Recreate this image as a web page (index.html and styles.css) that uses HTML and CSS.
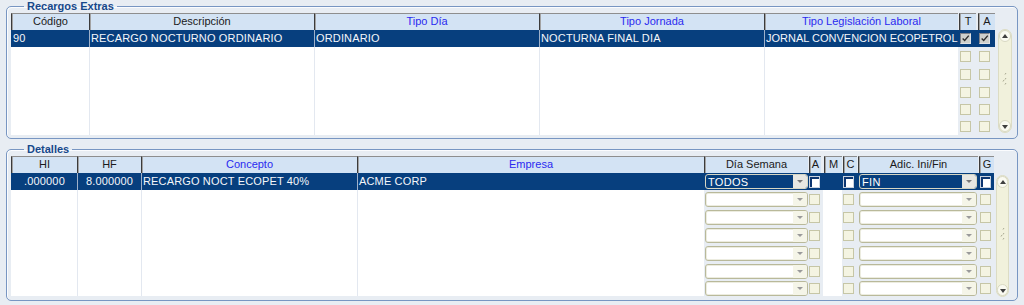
FILE: index.html
```html
<!DOCTYPE html>
<html lang="es">
<head>
  <meta charset="UTF-8" />
  <title>Recargos Extras</title>
  <link rel="stylesheet" href="styles.css">
</head>
<body>
  <fieldset class="group top">
    <legend>Recargos Extras</legend>
    <div class="grid-wrap">
      <div class="grid">
        <div class="row head">
          <div class="cell hd c-code">Código</div>
          <div class="cell hd c-desc">Descripción</div>
          <div class="cell hd link c-day">Tipo Día</div>
          <div class="cell hd link c-shift">Tipo Jornada</div>
          <div class="cell hd link c-law">Tipo Legislación Laboral</div>
          <div class="cell c-t"><span class="tag">T</span></div>
          <div class="cell c-a"><span class="tag">A</span></div>
        </div>
        <div class="row sel">
          <div class="cell txt first c-code">90</div>
          <div class="cell txt c-desc">RECARGO NOCTURNO ORDINARIO</div>
          <div class="cell txt c-day">ORDINARIO</div>
          <div class="cell txt c-shift">NOCTURNA FINAL DIA</div>
          <div class="cell txt tight c-law">JORNAL CONVENCION ECOPETROL</div>
          <div class="cell box c-t"><span class="chk on"><svg viewBox="0 0 11 11"><path d="M2 5.5 4.5 8 9.5 2" /></svg></span></div>
          <div class="cell box c-a"><span class="chk on"><svg viewBox="0 0 11 11"><path d="M2 5.5 4.5 8 9.5 2" /></svg></span></div>
        </div>
        <div class="row blank">
          <div class="cell txt first c-code"></div><div class="cell txt c-desc"></div><div class="cell txt c-day"></div><div class="cell txt c-shift"></div><div class="cell txt c-law"></div>
          <div class="cell box c-t"><span class="chk"></span></div><div class="cell box c-a"><span class="chk"></span></div>
        </div>
        <div class="row blank">
          <div class="cell txt first c-code"></div><div class="cell txt c-desc"></div><div class="cell txt c-day"></div><div class="cell txt c-shift"></div><div class="cell txt c-law"></div>
          <div class="cell box c-t"><span class="chk"></span></div><div class="cell box c-a"><span class="chk"></span></div>
        </div>
        <div class="row blank">
          <div class="cell txt first c-code"></div><div class="cell txt c-desc"></div><div class="cell txt c-day"></div><div class="cell txt c-shift"></div><div class="cell txt c-law"></div>
          <div class="cell box c-t"><span class="chk"></span></div><div class="cell box c-a"><span class="chk"></span></div>
        </div>
        <div class="row blank short">
          <div class="cell txt first c-code"></div><div class="cell txt c-desc"></div><div class="cell txt c-day"></div><div class="cell txt c-shift"></div><div class="cell txt c-law"></div>
          <div class="cell box c-t"><span class="chk"></span></div><div class="cell box c-a"><span class="chk"></span></div>
        </div>
        <div class="row blank short">
          <div class="cell txt first c-code"></div><div class="cell txt c-desc"></div><div class="cell txt c-day"></div><div class="cell txt c-shift"></div><div class="cell txt c-law"></div>
          <div class="cell box c-t"><span class="chk"></span></div><div class="cell box c-a"><span class="chk"></span></div>
        </div>
      </div>
      <div class="vscroll vs-top">
        <span class="sb-btn up"></span>
        <svg class="grip" viewBox="0 0 6 20"><path d="M4 2 3 3.5M4 7 3 8.5M4 12 3 13.5M2 9 1 10.5" /></svg>
        <span class="sb-btn down"></span>
      </div>
    </div>
  </fieldset>

  <fieldset class="group bottom">
    <legend>Detalles</legend>
    <div class="grid-wrap">
      <div class="grid">
        <div class="row head">
          <div class="cell hd c-hi">HI</div>
          <div class="cell hd c-hf">HF</div>
          <div class="cell hd link c-concept">Concepto</div>
          <div class="cell hd link c-company">Empresa</div>
          <div class="cell hd c-week">Día Semana</div>
          <div class="cell c-ca"><span class="tag">A</span></div>
          <div class="cell c-cm"><span class="tag">M</span></div>
          <div class="cell c-cc"><span class="tag">C</span></div>
          <div class="cell hd c-adic">Adic. Ini/Fin</div>
          <div class="cell c-cg"><span class="tag">G</span></div>
        </div>
        <div class="row sel">
          <div class="cell txt first num c-hi">.000000</div>
          <div class="cell txt num c-hf">8.000000</div>
          <div class="cell txt c-concept">RECARGO NOCT ECOPET 40%</div>
          <div class="cell txt c-company">ACME CORP</div>
          <div class="cell box c-week"><div class="combo"><span class="combo-val">TODOS</span><span class="combo-btn"></span></div></div>
          <div class="cell box c-ca"><span class="chk off"></span></div>
          <div class="cell box c-cm"></div>
          <div class="cell box c-cc"><span class="chk off"></span></div>
          <div class="cell box c-adic"><div class="combo"><span class="combo-val">FIN</span><span class="combo-btn"></span></div></div>
          <div class="cell box c-cg"><span class="chk off"></span></div>
        </div>
        <div class="row blank">
          <div class="cell txt first c-hi"></div><div class="cell txt c-hf"></div><div class="cell txt c-concept"></div><div class="cell txt c-company"></div>
          <div class="cell box c-week"><div class="combo"><span class="combo-val"></span><span class="combo-btn"></span></div></div>
          <div class="cell box c-ca"><span class="chk"></span></div><div class="cell blank-col c-cm"></div><div class="cell box c-cc"><span class="chk"></span></div>
          <div class="cell box c-adic"><div class="combo"><span class="combo-val"></span><span class="combo-btn"></span></div></div>
          <div class="cell box c-cg"><span class="chk"></span></div>
        </div>
        <div class="row blank">
          <div class="cell txt first c-hi"></div><div class="cell txt c-hf"></div><div class="cell txt c-concept"></div><div class="cell txt c-company"></div>
          <div class="cell box c-week"><div class="combo"><span class="combo-val"></span><span class="combo-btn"></span></div></div>
          <div class="cell box c-ca"><span class="chk"></span></div><div class="cell blank-col c-cm"></div><div class="cell box c-cc"><span class="chk"></span></div>
          <div class="cell box c-adic"><div class="combo"><span class="combo-val"></span><span class="combo-btn"></span></div></div>
          <div class="cell box c-cg"><span class="chk"></span></div>
        </div>
        <div class="row blank">
          <div class="cell txt first c-hi"></div><div class="cell txt c-hf"></div><div class="cell txt c-concept"></div><div class="cell txt c-company"></div>
          <div class="cell box c-week"><div class="combo"><span class="combo-val"></span><span class="combo-btn"></span></div></div>
          <div class="cell box c-ca"><span class="chk"></span></div><div class="cell blank-col c-cm"></div><div class="cell box c-cc"><span class="chk"></span></div>
          <div class="cell box c-adic"><div class="combo"><span class="combo-val"></span><span class="combo-btn"></span></div></div>
          <div class="cell box c-cg"><span class="chk"></span></div>
        </div>
        <div class="row blank">
          <div class="cell txt first c-hi"></div><div class="cell txt c-hf"></div><div class="cell txt c-concept"></div><div class="cell txt c-company"></div>
          <div class="cell box c-week"><div class="combo"><span class="combo-val"></span><span class="combo-btn"></span></div></div>
          <div class="cell box c-ca"><span class="chk"></span></div><div class="cell blank-col c-cm"></div><div class="cell box c-cc"><span class="chk"></span></div>
          <div class="cell box c-adic"><div class="combo"><span class="combo-val"></span><span class="combo-btn"></span></div></div>
          <div class="cell box c-cg"><span class="chk"></span></div>
        </div>
        <div class="row blank">
          <div class="cell txt first c-hi"></div><div class="cell txt c-hf"></div><div class="cell txt c-concept"></div><div class="cell txt c-company"></div>
          <div class="cell box c-week"><div class="combo"><span class="combo-val"></span><span class="combo-btn"></span></div></div>
          <div class="cell box c-ca"><span class="chk"></span></div><div class="cell blank-col c-cm"></div><div class="cell box c-cc"><span class="chk"></span></div>
          <div class="cell box c-adic"><div class="combo"><span class="combo-val"></span><span class="combo-btn"></span></div></div>
          <div class="cell box c-cg"><span class="chk"></span></div>
        </div>
        <div class="row blank last">
          <div class="cell txt first c-hi"></div><div class="cell txt c-hf"></div><div class="cell txt c-concept"></div><div class="cell txt c-company"></div>
          <div class="cell box c-week"><div class="combo"><span class="combo-val"></span><span class="combo-btn"></span></div></div>
          <div class="cell box c-ca"><span class="chk"></span></div><div class="cell blank-col c-cm"></div><div class="cell box c-cc"><span class="chk"></span></div>
          <div class="cell box c-adic"><div class="combo"><span class="combo-val"></span><span class="combo-btn"></span></div></div>
          <div class="cell box c-cg"><span class="chk"></span></div>
        </div>
      </div>
      <div class="vscroll vs-bottom">
        <span class="sb-btn up"></span>
        <svg class="grip" viewBox="0 0 6 20"><path d="M4 2 3 3.5M4 7 3 8.5M4 12 3 13.5M2 9 1 10.5" /></svg>
        <span class="sb-btn down"></span>
      </div>
    </div>
  </fieldset>
</body>
</html>
```

FILE: styles.css
```css
:root {
  --panel: #e8edf3;
  --frame: #7896c2;
  --navy: #073f7e;
  --head: #d3e3f4;
  --line: #e3e8f0;
  --olive: #b9b99a;
  --cream: #f4f4e2;
}

body {
  margin: 0;
  background: var(--panel);
  font-family: "Liberation Sans", Arial, sans-serif;
  font-size: 11px;
  color: #000;
}

.group {
  margin: 0 6px;
  padding: 1px 4px 3px 4px;
  min-width: 0;
  border: 1px solid var(--frame);
  border-radius: 5px;
  box-shadow: inset 1px 1px 0 #fbfcfe;
}

.group.bottom {
  margin-top: 4px;
}

legend {
  margin-left: 13px;
  padding: 0 3px;
  font-weight: bold;
  font-size: 11px;
  line-height: 12px;
  color: #17488a;
}

.grid-wrap {
  display: flex;
  align-items: flex-start;
}

.row {
  display: flex;
}

.row.head,
.row.sel {
  height: 17px;
}

.row.blank {
  height: 18px;
}

.row.short {
  height: 17px;
}

.row.last {
  height: 16px;
}

.cell {
  flex: none;
  box-sizing: border-box;
  height: 100%;
  overflow: hidden;
  white-space: nowrap;
}

/* column widths */
.c-code { width: 78px; }
.c-desc { width: 225px; }
.c-day { width: 225px; }
.c-shift { width: 225px; }
.c-law { width: 194px; }
.c-t { width: 19px; }
.c-a { width: 18px; }

.c-hi { width: 66px; }
.c-hf { width: 64px; }
.c-concept { width: 216px; }
.c-company { width: 347px; }
.c-week { width: 104px; }
.c-ca { width: 15px; }
.c-cm { width: 19px; }
.c-cc { width: 15px; }
.c-adic { width: 121px; }
.c-cg { width: 16px; }

/* headers */
.hd,
.tag {
  background: var(--head);
  border-top: 1px solid #8e8e8e;
  border-left: 1px solid #3b3b3b;
  box-shadow: inset 1px 0 0 #a3a3a3;
  text-align: center;
  line-height: 15px;
  color: #1a1a1a;
}

.hd.link {
  color: #2a2af0;
}

.c-adic.hd { margin-left: 1px; width: 120px; }

.tag {
  display: block;
  box-sizing: border-box;
  height: 100%;
  margin-left: 1px;
}

.c-t .tag { width: 17px; }
.c-a .tag { width: 17px; }
.c-ca .tag { width: 12px; }
.c-cm .tag { width: 18px; }
.c-cc .tag { width: 14px; }
.c-cg .tag { width: 15px; }

/* text cells */
.txt {
  background: #fff;
  border-left: 1px solid var(--line);
  padding-left: 1px;
  line-height: 17px;
  letter-spacing: 0.15px;
}

.txt.tight {
  letter-spacing: 0;
}

.txt.first {
  border-left-color: transparent;
}

.txt.num {
  text-align: center;
  padding-left: 0;
}

.sel .cell {
  background: var(--navy);
  color: #f4f6fa;
}

.sel .txt {
  border-left-color: #9fb1ca;
}

.sel .txt.first {
  border-left-color: var(--navy);
}

.blank-col {
  background: #fff;
}

/* checkbox cells */
.box {
  display: flex;
  align-items: center;
}

.chk {
  display: block;
  box-sizing: border-box;
  width: 11px;
  height: 11px;
  margin-left: 2px;
  border: 1px solid #c6c6a6;
  background: var(--cream);
}

.c-ca .chk,
.c-cc .chk {
  margin-left: 1px;
}

.chk.on {
  background: #cfd0cc;
  border: 1px solid #7d8088;
  border-right-color: #e0e2e6;
  border-bottom-color: #e0e2e6;
}

.chk.on svg {
  display: block;
  width: 9px;
  height: 9px;
}

.chk.on path {
  fill: none;
  stroke: #2e2e2e;
  stroke-width: 1.7;
}

.chk.off {
  width: 11px;
  height: 12px;
  background: #fff;
  border: 1px solid #c9d2df;
  box-shadow: inset 2px 2px 0 #0c3570;
}

/* combos */
.combo {
  display: flex;
  box-sizing: border-box;
  width: 103px;
  height: 15px;
  margin-left: 1px;
  border: 1px solid var(--olive);
  border-radius: 3px;
  background: #fff;
  box-shadow: inset 0 0 0 1px #ecece0;
  overflow: hidden;
}

.c-adic .combo {
  width: 118px;
  margin-left: 2px;
}

.combo-val {
  flex: 1;
  padding: 1px 0 0 2px;
  line-height: 13px;
  color: #fff;
  letter-spacing: 0.3px;
  overflow: hidden;
}

.combo-btn {
  position: relative;
  width: 14px;
  background: #f5f5e8;
}

.combo-btn::after {
  content: '';
  position: absolute;
  left: 4px;
  top: 5px;
  border-left: 3px solid transparent;
  border-right: 3px solid transparent;
  border-top: 3px solid #9a9a9a;
}

.sel .combo {
  background: var(--navy);
  border-color: #d6d6c3;
  box-shadow: none;
}

.sel .combo-btn {
  background: #e7e7e2;
}

.sel .combo-btn::after {
  border-top-color: #777;
}

/* scrollbars */
.vscroll {
  box-sizing: border-box;
  width: 14px;
  display: flex;
  flex-direction: column;
  justify-content: space-between;
  align-items: center;
  background: #f1f1dc;
  border: 1px solid #dcdcc4;
  border-radius: 7px;
}

.vs-top {
  height: 104px;
  margin: 16px 0 0 3px;
}

.vs-bottom {
  width: 13px;
  height: 122px;
  margin: 19px 0 0 2px;
}

.sb-btn {
  position: relative;
  display: block;
  box-sizing: border-box;
  width: 12px;
  height: 12px;
  border-radius: 6px;
  background: #fafaf1;
  border: 1px solid #d8d8c2;
}

.vs-bottom .sb-btn {
  width: 11px;
}

.sb-btn::after {
  content: '';
  position: absolute;
  left: 2px;
  border-left: 3px solid transparent;
  border-right: 3px solid transparent;
}

.sb-btn.up::after {
  top: 3px;
  border-bottom: 4px solid #3f3f3f;
}

.sb-btn.down::after {
  top: 4px;
  border-top: 4px solid #3f3f3f;
}

.grip {
  width: 6px;
  height: 20px;
}

.grip path {
  fill: none;
  stroke: #a8a890;
  stroke-width: 1;
}
```
